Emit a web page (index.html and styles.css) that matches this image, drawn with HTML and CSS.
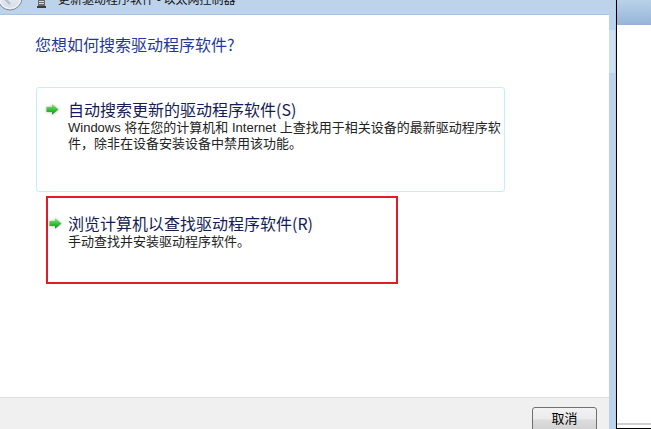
FILE: index.html
```html
<!DOCTYPE html>
<html>
<head>
    <meta charset="utf-8">
    <link rel="stylesheet" href="styles.css">
</head>
<body>
    <div class="screen">
        <div class="window">
            <!-- Title bar (top cut off in the capture) -->
            <div class="titlebar">
                <svg class="back-btn" width="26" height="14" viewBox="0 0 26 14">
                    <defs>
                        <linearGradient id="backFill" x1="0" y1="0" x2="0" y2="1">
                            <stop offset="0" stop-color="#f3f6fa"/>
                            <stop offset="1" stop-color="#d3dce7"/>
                        </linearGradient>
                    </defs>
                    <circle cx="10" cy="-2" r="12" fill="url(#backFill)" stroke="#7f8c9c" stroke-width="1"/>
                    <circle cx="10" cy="-2" r="10.5" fill="none" stroke="#ffffff" stroke-width="1" opacity="0.8"/>
                    <path d="M4 -2 L10 4 M4 -2 L16 -2" stroke="#b7c2cf" stroke-width="2.5" fill="none"/>
                </svg>
                <svg class="device-icon" width="9" height="9" viewBox="0 0 9 9">
                    <rect x="1" y="0" width="7" height="6" fill="#6b6b6b"/>
                    <rect x="2" y="1" width="5" height="1" fill="#d9d9d9"/>
                    <rect x="2" y="3" width="5" height="1" fill="#d9d9d9"/>
                    <rect x="0" y="6" width="9" height="2" fill="#3c3c3c"/>
                </svg>
                <span class="title-text">更新驱动程序软件 - 以太网控制器</span>
            </div>

            <div class="content">
                <h1 class="main-instruction">您想如何搜索驱动程序软件?</h1>

                <div class="options">
                    <div class="option option-hover">
                        <svg class="arrow" width="13" height="11" viewBox="0 0 13 11">
                            <defs>
                                <linearGradient id="arrowFill1" x1="0" y1="0" x2="0" y2="1">
                                    <stop offset="0" stop-color="#86e37f"/>
                                    <stop offset="0.5" stop-color="#3cc23c"/>
                                    <stop offset="1" stop-color="#0f8f16"/>
                                </linearGradient>
                            </defs>
                            <path d="M0.5 3 H6 V0.3 L12.5 5.5 L6 10.7 V8 H0.5 Z" fill="url(#arrowFill1)"/>
                        </svg>
                        <div class="option-text">
                            <div class="option-title">自动搜索更新的驱动程序软件(S)</div>
                            <div class="option-desc">Windows 将在您的计算机和 Internet 上查找用于相关设备的最新驱动程序软件，除非在设备安装设备中禁用该功能。</div>
                        </div>
                    </div>

                    <div class="option option-marked">
                        <svg class="arrow" width="13" height="11" viewBox="0 0 13 11">
                            <defs>
                                <linearGradient id="arrowFill2" x1="0" y1="0" x2="0" y2="1">
                                    <stop offset="0" stop-color="#86e37f"/>
                                    <stop offset="0.5" stop-color="#3cc23c"/>
                                    <stop offset="1" stop-color="#0f8f16"/>
                                </linearGradient>
                            </defs>
                            <path d="M0.5 3 H6 V0.3 L12.5 5.5 L6 10.7 V8 H0.5 Z" fill="url(#arrowFill2)"/>
                        </svg>
                        <div class="option-text">
                            <div class="option-title">浏览计算机以查找驱动程序软件(R)</div>
                            <div class="option-desc">手动查找并安装驱动程序软件。</div>
                        </div>
                    </div>
                </div>
            </div>

            <div class="footer">
                <button class="cancel-btn">取消</button>
            </div>
        </div>

        <div class="frame-strip">
            <div class="strip-thumb"></div>
        </div>
        <div class="frame-edge"></div>

        <div class="side">
            <div class="side-header"></div>
            <div class="side-body"></div>
            <div class="side-bottom"></div>
        </div>
    </div>
</body>
</html>
```

FILE: styles.css
```css
html, body {
    margin: 0;
    padding: 0;
    background: white;
}
body {
    font-family: "Noto Sans CJK SC", "Noto Sans", sans-serif;
    width: 651px;
    height: 429px;
    overflow: hidden;
}
.screen {
    display: flex;
    width: 651px;
    height: 429px;
}
.window {
    width: 609px;
    display: flex;
    flex-direction: column;
    background: white;
}
.titlebar {
    height: 14px;
    background: #bcd3eb;
    border-bottom: 1px solid #a8c3e2;
    display: flex;
    align-items: flex-start;
    overflow: hidden;
}
.back-btn {
    flex-shrink: 0;
}
.device-icon {
    margin-left: 11px;
    flex-shrink: 0;
}
.title-text {
    margin-left: 12px;
    font-size: 12px;
    line-height: 12px;
    margin-top: -7px;
    color: #111;
    white-space: nowrap;
}
.content {
    flex: 1;
    padding-left: 35px;
}
.main-instruction {
    margin: 18px 0 0 0;
    font-size: 16px;
    line-height: 22px;
    font-weight: normal;
    color: #1f389a;
}
.options {
    margin-top: 32px;
    margin-left: 1px;
}
.option {
    display: flex;
    align-items: flex-start;
    box-sizing: border-box;
}
.option-hover {
    width: 469px;
    height: 105px;
    border: 1px solid #c3eefa;
    border-radius: 3px;
    padding: 10px 0 0 9px;
    gap: 9px;
}
.option-marked {
    width: 352px;
    height: 88px;
    margin: 4px 0 0 10px;
    border: 2px solid #e31b23;
    padding: 14px 0 0 1px;
    gap: 6px;
}
.arrow {
    margin-top: 6px;
    flex-shrink: 0;
    filter: drop-shadow(0 0 1.5px rgba(0, 0, 0, 0.3));
}
.option-title {
    font-size: 16px;
    line-height: 22px;
    color: #151c55;
    white-space: nowrap;
}
.option-desc {
    font-family: "Liberation Sans", "Noto Sans CJK SC", sans-serif;
    font-size: 13px;
    line-height: 16px;
    color: #222;
    width: 438px;
}
.footer {
    height: 31px;
    background: #f0f0f0;
    border-top: 1px solid #dfdfdf;
    display: flex;
    justify-content: flex-end;
    align-items: flex-start;
    padding-right: 12px;
}
.cancel-btn {
    margin-top: 9px;
    width: 65px;
    height: 26px;
    border: 1px solid #707070;
    border-radius: 3px;
    background: linear-gradient(to bottom, #f2f2f2 0%, #ebebeb 45%, #dddddd 50%, #cfcfcf 100%);
    font-family: "Noto Sans CJK SC", sans-serif;
    font-size: 13px;
    line-height: 18px;
    padding: 0 0 4px 0;
    color: #000;
}
.frame-strip {
    width: 6px;
    background: #bcd3eb;
    border-right: 1px solid #9fd8ee;
}
.strip-thumb {
    margin-top: 30px;
    height: 43px;
    background: #cddff1;
}
.frame-edge {
    width: 1px;
    background: #000;
}
.side {
    flex: 1;
    display: flex;
    flex-direction: column;
}
.side-header {
    height: 25px;
    background: linear-gradient(to bottom, #b9d2eb, #97b4d8);
}
.side-body {
    flex: 1;
    background: white;
}
.side-bottom {
    height: 6px;
    border-top: 2px solid #cfcfcf;
    border-bottom: 1px solid #000;
    box-sizing: border-box;
}
```
